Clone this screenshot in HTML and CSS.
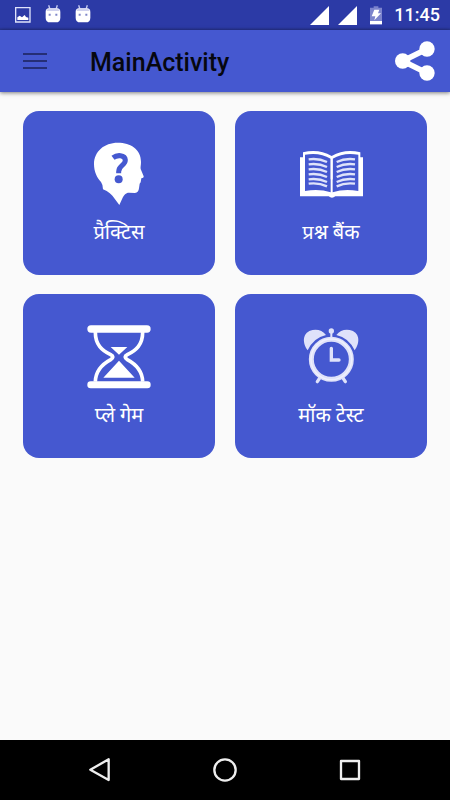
FILE: index.html
```html
<!DOCTYPE html>
<html lang="hi">
<head>
<meta charset="utf-8">
<meta name="viewport" content="width=device-width, initial-scale=1">
<title>MainActivity</title>
<link rel="stylesheet" href="styles.css">
</head>
<body>
<div class="status">
  <div class="notices">
    <svg width="16" height="16" viewBox="0 0 48 48" aria-hidden="true"><path fill="none" stroke="#dfe3fb" stroke-width="4" d="M2 2h43v43H2z"/><path fill="#fff" d="M7 39V31l7-5 7 5 8-7 4 6 7 2v7z"/></svg>
    <svg class="droid" width="16" height="20" viewBox="0 0 48 60" aria-hidden="true"><path fill="none" stroke="#c9cef2" stroke-width="4" d="M11 4l4 12M37 4l-4 12"/><path fill="#fff" d="M2 24q0-11 10-11h24q10 0 10 11v17q0 14-14 14H16Q2 55 2 41z"/><path fill="#d0d2ee" d="M4 21q3-8 10-8h20q7 0 10 8z"/><path fill="#7f86c8" d="M11 29h6v6h-6zM31 29h6v6h-6z"/></svg>
    <svg class="droid" width="16" height="20" viewBox="0 0 48 60" aria-hidden="true"><path fill="none" stroke="#c9cef2" stroke-width="4" d="M11 4l4 12M37 4l-4 12"/><path fill="#fff" d="M2 24q0-11 10-11h24q10 0 10 11v17q0 14-14 14H16Q2 55 2 41z"/><path fill="#d0d2ee" d="M4 21q3-8 10-8h20q7 0 10 8z"/><path fill="#7f86c8" d="M11 29h6v6h-6zM31 29h6v6h-6z"/></svg>
  </div>
  <div class="system">
    <svg width="20" height="20" viewBox="0 0 20 20" aria-hidden="true"><path fill="#fff" d="M0 20L19 1v19z"/></svg>
    <svg width="20" height="20" viewBox="0 0 20 20" aria-hidden="true"><path fill="#fff" d="M0 20L19 1v19z"/></svg>
    <svg class="battery" width="12" height="20" viewBox="0 0 36 60" aria-hidden="true"><path fill="#7c84cd" d="M11 4h14v4h11v52H0V8h11z"/><path fill="#fff" d="M0 48h36v9H0zM13 14h15l-4 11h9L13 46l3-12H5z"/></svg>
    <time class="clock">11:45</time>
  </div>
</div>
<header class="appbar">
  <button class="menu" aria-label="Menu"><svg width="24" height="18" viewBox="0 0 24 18" aria-hidden="true"><path fill="#252e76" d="M0 1h24v2H0zM0 8h24v2H0zM0 15h24v2H0z"/></svg></button>
  <h1>MainActivity</h1>
  <button class="share" aria-label="Share"><svg width="40" height="40" viewBox="0 0 120 120" aria-hidden="true"><path fill="none" stroke="#fff" stroke-width="17" d="M96 24L23 60l73 36"/><g fill="#fff"><circle cx="96" cy="24" r="23"/><circle cx="23" cy="60" r="23"/><circle cx="96" cy="96" r="23"/></g></svg></button>
</header>
<main class="grid">
  <button class="card">
    <svg viewBox="-3 -1 240 240" aria-hidden="true"><path fill="#fff" d="M113 37c40 0 70 20 70 58 0 10-2 15-1 21l9 22c1 4-3 5-7 6l-2 12-3 4-2 14q-1 12-12 14l-18-1c-10 0-15 8-18 13l-11 24-14-19c-8-12-19-22-35-28q0-14-6-22c-12-13-21-31-21-54 0-38 31-64 71-64z"/><path fill="none" stroke="#4558d0" stroke-width="15" d="M99 82c12-9 36-9 37 7 0 17-20 16-20 35v5"/><circle cx="116" cy="147" r="12" fill="#4558d0"/></svg>
    <span>प्रैक्टिस</span>
  </button>
  <button class="card">
    <svg viewBox="3 -1 240 240" aria-hidden="true"><path fill="#fff" d="M30 81h9V66q46-12 86 11 40-23 86-11v15h8v117h-83q-10 8-20 0H30z"/><path fill="#4558d0" d="M45 73q44-8 77 12v101q-35-12-77-4zM128 85q33-20 77-12v109q-42-8-77 4z"/><path fill="#fff" d="M122 80h6v67h-6z"/><path fill="none" stroke="#dfe3fa" stroke-width="7" d="M56 87q30-4 55 8M56 102q30-4 55 8M56 117q30-4 55 8M56 132q30-4 55 8M56 147q30-4 55 8M56 160q30-4 55 8M140 95q25-12 55-8M140 110q25-12 55-8M140 125q25-12 55-8M140 140q25-12 55-8M140 155q25-12 55-8M140 168q25-12 55-8"/></svg>
    <span>प्रश्न बैंक</span>
  </button>
  <button class="card">
    <svg viewBox="-4 -7 240 240" aria-hidden="true"><g fill="#fff"><rect x="21" y="30" width="190" height="22" rx="11"/><rect x="21" y="198" width="190" height="21" rx="10"/><path d="M91 95h50l-25 23zM116 136l47 51H69z"/></g><path fill="none" stroke="#fff" stroke-width="11" d="M45 50C45 89 65 105 91 118q13 7 0 15C65 147 46 165 45 199M187 50c0 39-20 55-46 68q-13 7 0 15c26 14 45 32 46 66"/></svg>
    <span>प्ले गेम</span>
  </button>
  <button class="card">
    <svg viewBox="3 -7 240 240" aria-hidden="true"><g fill="#dfe2fa"><path d="M53 105C35 80 38 50 68 44q25-4 40 15-37 8-55 46zM194 105c18-25 15-55-15-61q-25-4-40 15 37 8 55 46z"/><circle cx="124" cy="47" r="8"/><path d="M121 50h6v20h-6z"/></g><g fill="none" stroke="#dfe2fa" stroke-linecap="round"><circle cx="124" cy="132" r="60" stroke-width="15"/><path stroke-width="10" d="M90 187l-8 12M158 187l8 12"/><path stroke-width="10" d="M124 99v35h23"/></g><circle cx="124" cy="132" r="61" fill="none" stroke="#f0f1fd" stroke-width="4"/></svg>
    <span>मॉक टेस्ट</span>
  </button>
</main>
<nav class="navbar">
  <button aria-label="Back"><svg width="26" height="26" viewBox="0 0 78 78" aria-hidden="true"><path d="M65 7v62L10 38z"/></svg></button>
  <button aria-label="Home"><svg width="26" height="26" viewBox="0 0 78 78" aria-hidden="true"><circle cx="39" cy="39" r="32"/></svg></button>
  <button aria-label="Recent apps"><svg width="26" height="26" viewBox="0 0 78 78" aria-hidden="true"><rect x="12" y="12" width="54" height="54"/></svg></button>
</nav>
</body>
</html>
```
FILE: styles.css
```css
* { box-sizing: border-box; }
body {
  margin: 0;
  min-height: 100vh;
  display: flex;
  flex-direction: column;
  background: #fafafa;
  font-family: Roboto, "Noto Sans", "Noto Sans Devanagari", sans-serif;
}
button {
  padding: 0;
  border: 0;
  background: none;
  color: inherit;
  font: inherit;
}
svg { display: block; flex: none; }
.status {
  height: 30px;
  padding: 0 10px 0 15px;
  display: flex;
  justify-content: space-between;
  align-items: center;
  background: linear-gradient(#2c3aa6 27px, #26338f);
  color: #fff;
}
.notices { display: flex; align-items: center; gap: 14px; }
.droid { margin-top: -2px; }
.system { display: flex; align-items: center; gap: 8px; }
.battery { margin: 0 4px; }
.clock { font-size: 18px; font-weight: 500; line-height: 20px; }
.appbar {
  height: 62px;
  padding: 0 15px 0 23px;
  display: flex;
  align-items: center;
  background: #4558d0;
  box-shadow: 0 1px 4px rgba(0, 0, 0, 0.5);
}
.appbar h1 {
  flex: 1;
  margin: 4px 0 0 43px;
  color: #06070f;
  font-size: 25px;
  font-weight: 500;
  line-height: 32px;
}
.grid {
  flex: 1;
  display: grid;
  grid-template-columns: 1fr 1fr;
  align-content: start;
  gap: 19px 20px;
  padding: 19px 23px;
}
.card {
  height: 164px;
  padding: 19px 8px;
  display: flex;
  flex-direction: column;
  align-items: center;
  justify-content: flex-start;
  border-radius: 16px;
  background: #4558d0;
  color: #fff;
  font-size: 20px;
  line-height: 28px;
}
.card svg { width: 80px; height: 80px; }
.card span { margin-top: 8px; }
.navbar {
  height: 60px;
  padding: 0 38px;
  display: flex;
  background: #000;
}
.navbar button {
  flex: 1;
  display: flex;
  align-items: center;
  justify-content: center;
}
.navbar svg {
  fill: none;
  stroke: #eee;
  stroke-width: 7;
  stroke-linejoin: round;
}
```
